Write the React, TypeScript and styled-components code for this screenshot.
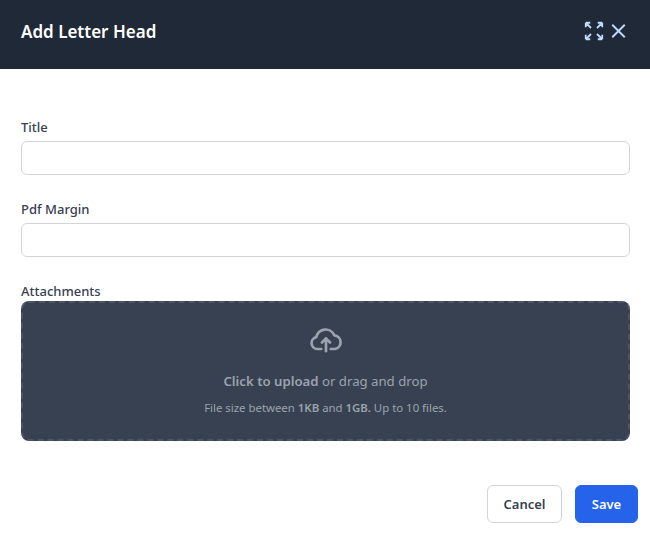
import React from "react";
import styled, { createGlobalStyle } from "styled-components";

const Global = createGlobalStyle`
  html, body { margin: 0; padding: 0; background: #fff; }
  body { font-family: "Noto Sans", "Open Sans", sans-serif; }
  * { box-sizing: border-box; }
`;

const Dialog = styled.div`
  width: 650px;
  height: 542px;
  display: flex;
  flex-direction: column;
  background: #fff;
`;

const Header = styled.header`
  height: 69px;
  background: #1f2937;
  display: flex;
  align-items: center;
  justify-content: space-between;
  padding: 0 21px 7px;
`;

const Heading = styled.h2`
  margin: 0;
  font-size: 17px;
  font-weight: 600;
  color: #fff;
`;

const HeaderActions = styled.div`
  display: flex;
  align-items: center;
  margin-right: -2px;
`;

const IconButton = styled.button`
  padding: 0;
  border: 0;
  background: none;
  color: #bfdbfe;
  display: flex;
  svg { display: block; }
`;

const Form = styled.form`
  flex: 1;
  display: flex;
  flex-direction: column;
  padding: 49px 20px 19px 21px;
`;

const Field = styled.div`
  display: flex;
  flex-direction: column;
  margin-bottom: 25px;
`;

const Label = styled.label`
  font-size: 13px;
  line-height: 18px;
  font-weight: 500;
  color: #374151;
  margin-bottom: 5px;
`;

const Input = styled.input`
  height: 34px;
  border: 1px solid #d1d5db;
  border-radius: 6px;
  background: #fff;
  outline: none;
`;

const AttachLabel = styled(Label)`
  margin-bottom: 1px;
`;

const Dropzone = styled.div`
  height: 140px;
  border: 2px dashed #4b5563;
  border-radius: 8px;
  background: #374151;
  display: flex;
  flex-direction: column;
  align-items: center;
  padding-top: 19px;
  color: #9ca3af;
`;

const UploadLine = styled.p`
  margin: 14px 0 0;
  font-size: 13.2px;
  line-height: 18px;
  b { font-weight: 600; }
`;

const HintLine = styled.p`
  margin: 10px 0 0;
  font-size: 11.4px;
  line-height: 16px;
  b { font-weight: 600; }
`;

const Footer = styled.div`
  margin-top: auto;
  display: flex;
  justify-content: flex-end;
  gap: 13px;
  margin-right: -8px;
`;

const Button = styled.button<{ $primary?: boolean }>`
  height: 38px;
  width: ${(p) => (p.$primary ? "63px" : "75px")};
  border-radius: 6px;
  border: 1px solid ${(p) => (p.$primary ? "#2563eb" : "#d1d5db")};
  background: ${(p) => (p.$primary ? "#2563eb" : "#fff")};
  color: ${(p) => (p.$primary ? "#fff" : "#374151")};
  font-family: inherit;
  font-size: 13px;
  font-weight: 600;
`;

export default function App() {
  return (
    <>
      <Global />
      <Dialog>
        <Header>
          <Heading>Add Letter Head</Heading>
          <HeaderActions>
            <IconButton type="button" aria-label="Expand">
              <svg width="24" height="24" viewBox="0 0 24 24" fill="none" stroke="currentColor" strokeWidth="1.8">
                <path d="M3.75 3.75v4.5m0-4.5h4.5m-4.5 0L9 9M3.75 20.25v-4.5m0 4.5h4.5m-4.5 0L9 15M20.25 3.75h-4.5m4.5 0v4.5m0-4.5L15 9m5.25 11.25h-4.5m4.5 0v-4.5m0 4.5L15 15" />
              </svg>
            </IconButton>
            <IconButton type="button" aria-label="Close">
              <svg width="25" height="26" viewBox="0 0 24 24" fill="none" stroke="currentColor" strokeWidth="1.8">
                <path d="M6 18L18 6M6 6l12 12" />
              </svg>
            </IconButton>
          </HeaderActions>
        </Header>
        <Form>
          <Field>
            <Label>Title</Label>
            <Input />
          </Field>
          <Field>
            <Label>Pdf Margin</Label>
            <Input />
          </Field>
          <Field>
            <AttachLabel>Attachments</AttachLabel>
            <Dropzone>
              <svg width="36" height="36" viewBox="0 0 24 24" fill="none" stroke="currentColor" strokeWidth="1.8" strokeLinecap="round" strokeLinejoin="round">
                <path d="M8.8 18H6.2A4 4 0 0 1 5.5 10.1A6.3 6.3 0 0 1 17.5 8.9A4.6 4.6 0 0 1 18 18H15.2" />
                <path d="M12 11V19.5" />
                <path d="M9.3 13.7L12 11L14.7 13.7" />
              </svg>
              <UploadLine><b>Click to upload</b> or drag and drop</UploadLine>
              <HintLine>File size between <b>1KB</b> and <b>1GB.</b> Up to 10 files.</HintLine>
            </Dropzone>
          </Field>
          <Footer>
            <Button type="button">Cancel</Button>
            <Button type="button" $primary>Save</Button>
          </Footer>
        </Form>
      </Dialog>
    </>
  );
}
